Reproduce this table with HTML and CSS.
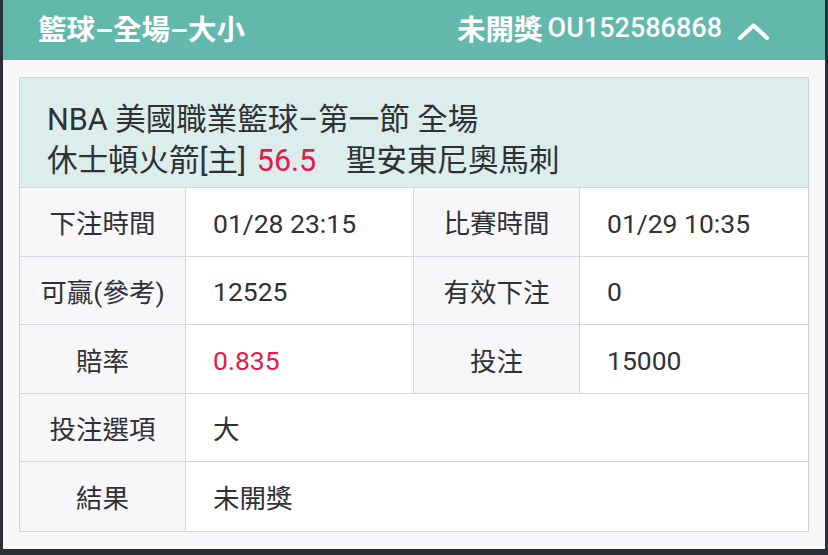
FILE: index.html
```html
<!DOCTYPE html>
<html lang="zh-Hant">
<head>
<meta charset="utf-8">
<link rel="stylesheet" href="styles.css">
</head>
<body>
<div class="panel">
  <div class="bar">
    <div class="bar-title">籃球–全場–大小</div>
    <div class="bar-right">
      <span class="bar-status">未開獎</span>
      <span class="bar-id">OU152586868</span>
      <svg class="chev" width="33" height="19" viewBox="0 0 33 19"><path d="M3 16 L16.5 3.5 L30 16" fill="none" stroke="#fff" stroke-width="4.2" stroke-linecap="round" stroke-linejoin="round"/></svg>
    </div>
  </div>
  <div class="body">
    <div class="card">
      <div class="card-head">
        <div class="line">NBA 美國職業籃球–第一節 全場</div>
        <div class="line">休士頓火箭[主] <span class="red line-num">56.5</span>&nbsp;&nbsp; 聖安東尼奧馬刺</div>
      </div>
      <div class="grid">
        <div class="lab">下注時間</div>
        <div class="val num">01/28 23:15</div>
        <div class="lab">比賽時間</div>
        <div class="val num last">01/29 10:35</div>

        <div class="lab">可贏(參考)</div>
        <div class="val num">12525</div>
        <div class="lab">有效下注</div>
        <div class="val num last">0</div>

        <div class="lab">賠率</div>
        <div class="val num red">0.835</div>
        <div class="lab">投注</div>
        <div class="val num last">15000</div>

        <div class="lab">投注選項</div>
        <div class="val span last">大</div>

        <div class="lab bottom">結果</div>
        <div class="val span last bottom">未開獎</div>
      </div>
    </div>
  </div>
</div>
</body>
</html>
```
FILE: styles.css
```css
* { box-sizing: border-box; }
html, body { margin: 0; padding: 0; }
body {
  background: #2b2f39;
  width: 828px;
  height: 555px;
  overflow: hidden;
  font-family: Roboto, "Noto Sans CJK TC", "Noto Sans CJK SC", sans-serif;
  color: #303136;
}
.panel {
  margin: 0 3px;
  height: 549px;
  background: #f8f8fa;
  display: flex;
  flex-direction: column;
}
.bar {
  height: 61px;
  background: #62b8ad;
  color: #fff;
  display: flex;
  align-items: center;
  justify-content: space-between;
  padding: 0 55px 5px 35px;
}
.bar-title {
  font-size: 28.5px;
  font-weight: 700;
}
.bar-right {
  display: flex;
  align-items: center;
  font-weight: 700;
}
.bar-status { font-size: 28.5px; }
.bar-id { margin-left: 5px; font-size: 27px; font-weight: 500; }
.chev { margin-left: 15px; margin-top: 7px; }
.body {
  flex: 1;
  padding: 17px 16px;
}
.card {
  border: 1px solid #d3d4da;
  background: #fff;
}
.card-head {
  background: #dceeeb;
  height: 110px;
  padding: 21px 27px 0;
  font-size: 30.5px;
  line-height: 41px;
  border-bottom: 1px solid #d3d4da;
  white-space: nowrap;
}
.line-num { margin: 0 7px 0 3px; }
.red { color: #e5194a; }
.grid {
  display: grid;
  grid-template-columns: 166px 228px 166px 1fr;
  grid-auto-rows: 68.6px;
  font-size: 26.5px;
}
.lab, .val {
  display: flex;
  align-items: center;
  border-bottom: 1px solid #d6d7dc;
  border-right: 1px solid #d6d7dc;
}
.lab {
  justify-content: center;
  background: #f7f7f9;
}
.val {
  padding-left: 27px;
  background: #fff;
}
.val.num { padding-top: 3px; }
.val.last { border-right: none; }
.val.span { grid-column: span 3; }
.bottom { border-bottom: none; }
```
